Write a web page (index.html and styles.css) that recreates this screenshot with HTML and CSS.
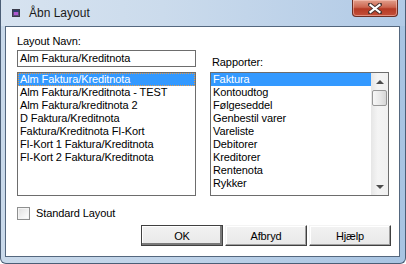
FILE: index.html
```html
<!DOCTYPE html>
<html lang="da">
  <head>
    <meta charset="UTF-8" />
    <title>Åbn Layout</title>
    <link rel="stylesheet" href="styles.css">
  </head>
  <body>
    <div class="window">
      <div class="titlebar">
        <svg class="app-icon" width="8" height="8" viewBox="0 0 8 8">
          <rect x="0.5" y="0.5" width="7" height="7" fill="#5a4f7a" stroke="#3a3a4a" />
          <rect x="1" y="1" width="6" height="2" fill="#2e3f6a" />
          <rect x="2" y="3" width="4" height="3" fill="#b05ad0" />
        </svg>
        <span class="title">Åbn Layout</span>
        <div class="close">
          <svg width="14" height="11" viewBox="0 0 14 11">
            <path d="M2 1.5 L12 9.5 M12 1.5 L2 9.5" stroke="#4a3430" stroke-width="4" stroke-linecap="square" />
            <path d="M2.5 2 L11.5 9 M11.5 2 L2.5 9" stroke="#fff" stroke-width="2.2" stroke-linecap="square" />
          </svg>
        </div>
      </div>
      <div class="client">
        <div class="columns">
          <div class="col">
            <div class="lbl">Layout Navn:</div>
            <div class="field">Alm Faktura/Kreditnota</div>
            <ul class="listbox layouts">
              <li class="sel focus">Alm Faktura/Kreditnota</li>
              <li>Alm Faktura/Kreditnota - TEST</li>
              <li>Alm Faktura/kreditnota 2</li>
              <li>D Faktura/Kreditnota</li>
              <li>Faktura/Kreditnota FI-Kort</li>
              <li>FI-Kort 1 Faktura/Kreditnota</li>
              <li>FI-Kort 2 Faktura/Kreditnota</li>
            </ul>
          </div>
          <div class="col col-right">
            <div class="lbl">Rapporter:</div>
            <div class="listbox reports">
              <ul>
                <li class="sel">Faktura</li>
                <li>Kontoudtog</li>
                <li>Følgeseddel</li>
                <li>Genbestil varer</li>
                <li>Vareliste</li>
                <li>Debitorer</li>
                <li>Kreditorer</li>
                <li>Rentenota</li>
                <li>Rykker</li>
              </ul>
              <div class="scrollbar">
                <div class="arrow"><span class="tri up"></span></div>
                <div class="thumb"></div>
                <div class="track"></div>
                <div class="arrow"><span class="tri down"></span></div>
              </div>
            </div>
          </div>
        </div>
        <div class="check-row">
          <span class="check"></span>
          <span>Standard Layout</span>
        </div>
        <div class="buttons">
          <button type="button" class="btn default">OK</button>
          <button type="button" class="btn">Afbryd</button>
          <button type="button" class="btn">Hjælp</button>
        </div>
      </div>
    </div>
  </body>
</html>
```

FILE: styles.css
```css
html,
body {
  margin: 0;
  padding: 0;
}

body {
  width: 406px;
  height: 264px;
  overflow: hidden;
  font-family: "Liberation Sans", Arial, sans-serif;
  font-size: 11px;
  letter-spacing: -0.1px;
  color: #000;
}

.window {
  box-sizing: border-box;
  width: 406px;
  height: 264px;
  display: flex;
  flex-direction: column;
  padding: 0 5px 6px 4px;
  border: 1px solid #4b5e76;
  border-top: none;
  border-radius: 0 0 6px 6px;
  background: linear-gradient(to right, #c9d9ea, #bfd3e9 45%, #a8c4e2);
}

.titlebar {
  height: 26px;
  display: flex;
  align-items: flex-start;
  background: linear-gradient(to right, #d7e3f0, #cbdbec 40%, #b1cae6);
  margin: 0 -5px 0 -4px;
}

.app-icon {
  margin: 9px 0 0 11px;
}

.title {
  font-size: 12px;
  line-height: 14px;
  letter-spacing: 0;
  margin: 6px 0 0 9px;
  color: #1a1a1a;
}

.close {
  margin-left: auto;
  margin-right: 7px;
  width: 46px;
  height: 17px;
  box-sizing: border-box;
  border: 1px solid #6b2e24;
  border-top: none;
  border-radius: 0 0 4px 4px;
  background: linear-gradient(to bottom, #e2a08c, #cc6650 45%, #b53a24 55%, #c4503a);
  display: flex;
  align-items: center;
  justify-content: center;
  box-shadow: inset 0 0 0 1px rgba(255, 210, 200, 0.5);
}

.client {
  flex: 1;
  background: #fff;
  border: 1px solid #54677e;
  padding: 8px 8px 0 11px;
  display: flex;
  flex-direction: column;
}

.columns {
  display: flex;
  gap: 14px;
}

.col {
  width: 179px;
  display: flex;
  flex-direction: column;
}

.col-right {
  width: 179px;
}

.lbl {
  line-height: 13px;
  height: 13px;
}

.col-right .lbl {
  margin-top: 21px;
  padding-left: 2px;
}

.field {
  box-sizing: border-box;
  height: 17px;
  margin-top: 2px;
  border: 1px solid #6d6d6d;
  padding: 1px 2px;
  line-height: 13px;
}

.listbox {
  box-sizing: border-box;
  height: 124px;
  border: 1px solid #6d6d6d;
  margin: 5px 0 0;
  padding: 0;
  list-style: none;
}

.col-right .listbox {
  margin-top: 3px;
}

.listbox li {
  line-height: 13px;
  height: 13px;
  padding-left: 2px;
  white-space: nowrap;
}

.sel {
  background: #3399ff;
  color: #fff;
}

.focus {
  box-sizing: border-box;
  border: 1px dotted #e39a4c;
  padding-left: 1px !important;
  line-height: 11px !important;
}

.reports {
  display: flex;
}

.reports ul {
  flex: 1;
  margin: 0;
  padding: 0;
  list-style: none;
}

.scrollbar {
  width: 17px;
  display: flex;
  flex-direction: column;
  background: linear-gradient(to right, #e6e6e6, #f4f4f4 40%, #f0f0f0);
}

.arrow {
  height: 17px;
  display: flex;
  align-items: center;
  justify-content: center;
}

.tri {
  width: 0;
  height: 0;
  border-left: 4px solid transparent;
  border-right: 4px solid transparent;
}

.tri.up {
  border-bottom: 4px solid #4d4d4d;
}

.tri.down {
  border-top: 4px solid #4d4d4d;
}

.thumb {
  box-sizing: border-box;
  height: 16px;
  margin: 0 1px;
  border: 1px solid #979797;
  border-radius: 2px;
  background: linear-gradient(to right, #f7f7f7, #e9e9e9 50%, #d6d6d6);
}

.track {
  flex: 1;
}

.check-row {
  display: flex;
  align-items: center;
  gap: 6px;
  margin-top: 11px;
  height: 13px;
  line-height: 13px;
}

.check {
  box-sizing: border-box;
  width: 13px;
  height: 13px;
  border: 1px solid #8e8f8f;
  background: linear-gradient(135deg, #dedede, #f6f6f6 70%, #fff);
  box-shadow: inset 0 0 0 1px #f4f4f4;
}

.buttons {
  display: flex;
  justify-content: flex-end;
  gap: 2px;
  margin-top: 5px;
}

.btn {
  box-sizing: border-box;
  width: 82px;
  height: 21px;
  padding: 0;
  font-family: inherit;
  font-size: 11px;
  letter-spacing: -0.1px;
  color: #000;
  background: linear-gradient(to bottom, #f2f2f2, #e8e8e8);
  border: 1px solid;
  border-color: #f4f4f4 #404040 #404040 #f4f4f4;
  box-shadow: inset -1px -1px #a0a0a0, inset 1px 1px #fff;
}

.btn.default {
  border-color: #404040;
  box-shadow: inset -2px -2px #7a7a7a, inset 1px 1px #fff;
}
```
